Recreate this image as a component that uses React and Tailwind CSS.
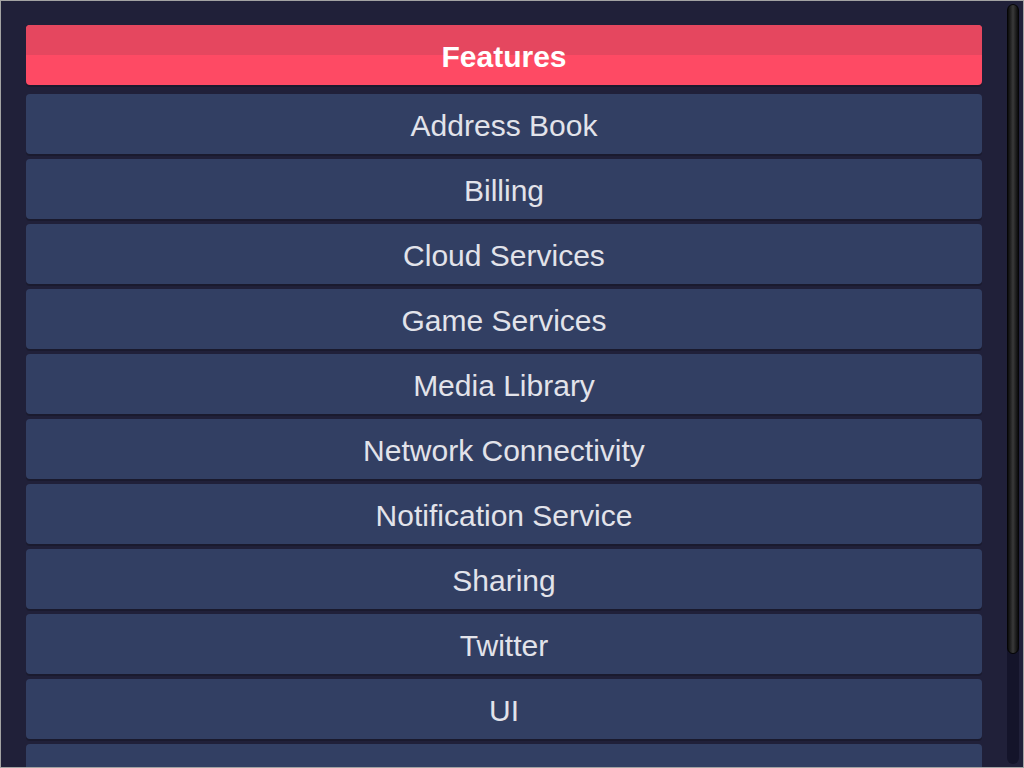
import React from 'react';

const features = [
  'Address Book',
  'Billing',
  'Cloud Services',
  'Game Services',
  'Media Library',
  'Network Connectivity',
  'Notification Service',
  'Sharing',
  'Twitter',
  'UI',
  '',
];

const FeatureRow = ({ label }) => (
  <div className="h-[60px] mb-[5px] shrink-0 rounded-[4px] bg-[#323f63] shadow-[0_2px_0_#1a1a2e] flex items-center justify-center pt-[3px] text-[30px] leading-none text-[#e2e3ea]">
    {label}
  </div>
);

export default function App() {
  return (
    <div
      className="w-[1024px] h-[768px] overflow-hidden bg-[#202039] border border-[#a3a3a3] flex"
      style={{ fontFamily: '"Liberation Sans", Arial, sans-serif' }}
    >
      <div className="flex-1 pl-[25px] pr-[25px] pt-[24px] flex flex-col overflow-hidden">
        <div className="h-[60px] mb-[9px] shrink-0 rounded-[4px] overflow-hidden relative bg-[#fe4a64] shadow-[0_2px_0_#1a1a2e] flex items-center justify-center pt-[3px]">
          <div className="absolute inset-x-0 top-0 h-[30px] bg-[#e5475f]" />
          <span className="relative text-[30px] leading-none font-bold text-white">Features</span>
        </div>
        {features.map((f, i) => (
          <FeatureRow key={i} label={f} />
        ))}
      </div>
      <div className="w-[12px] mt-[3px] mb-[3px] mr-[4px] rounded-full bg-[#14142a] flex flex-col overflow-hidden">
        <div className="h-[650px] rounded-full bg-gradient-to-r from-[#0c0c0c] via-[#3a3a3a] to-[#0c0c0c] border border-[#050505]" />
      </div>
    </div>
  );
}
